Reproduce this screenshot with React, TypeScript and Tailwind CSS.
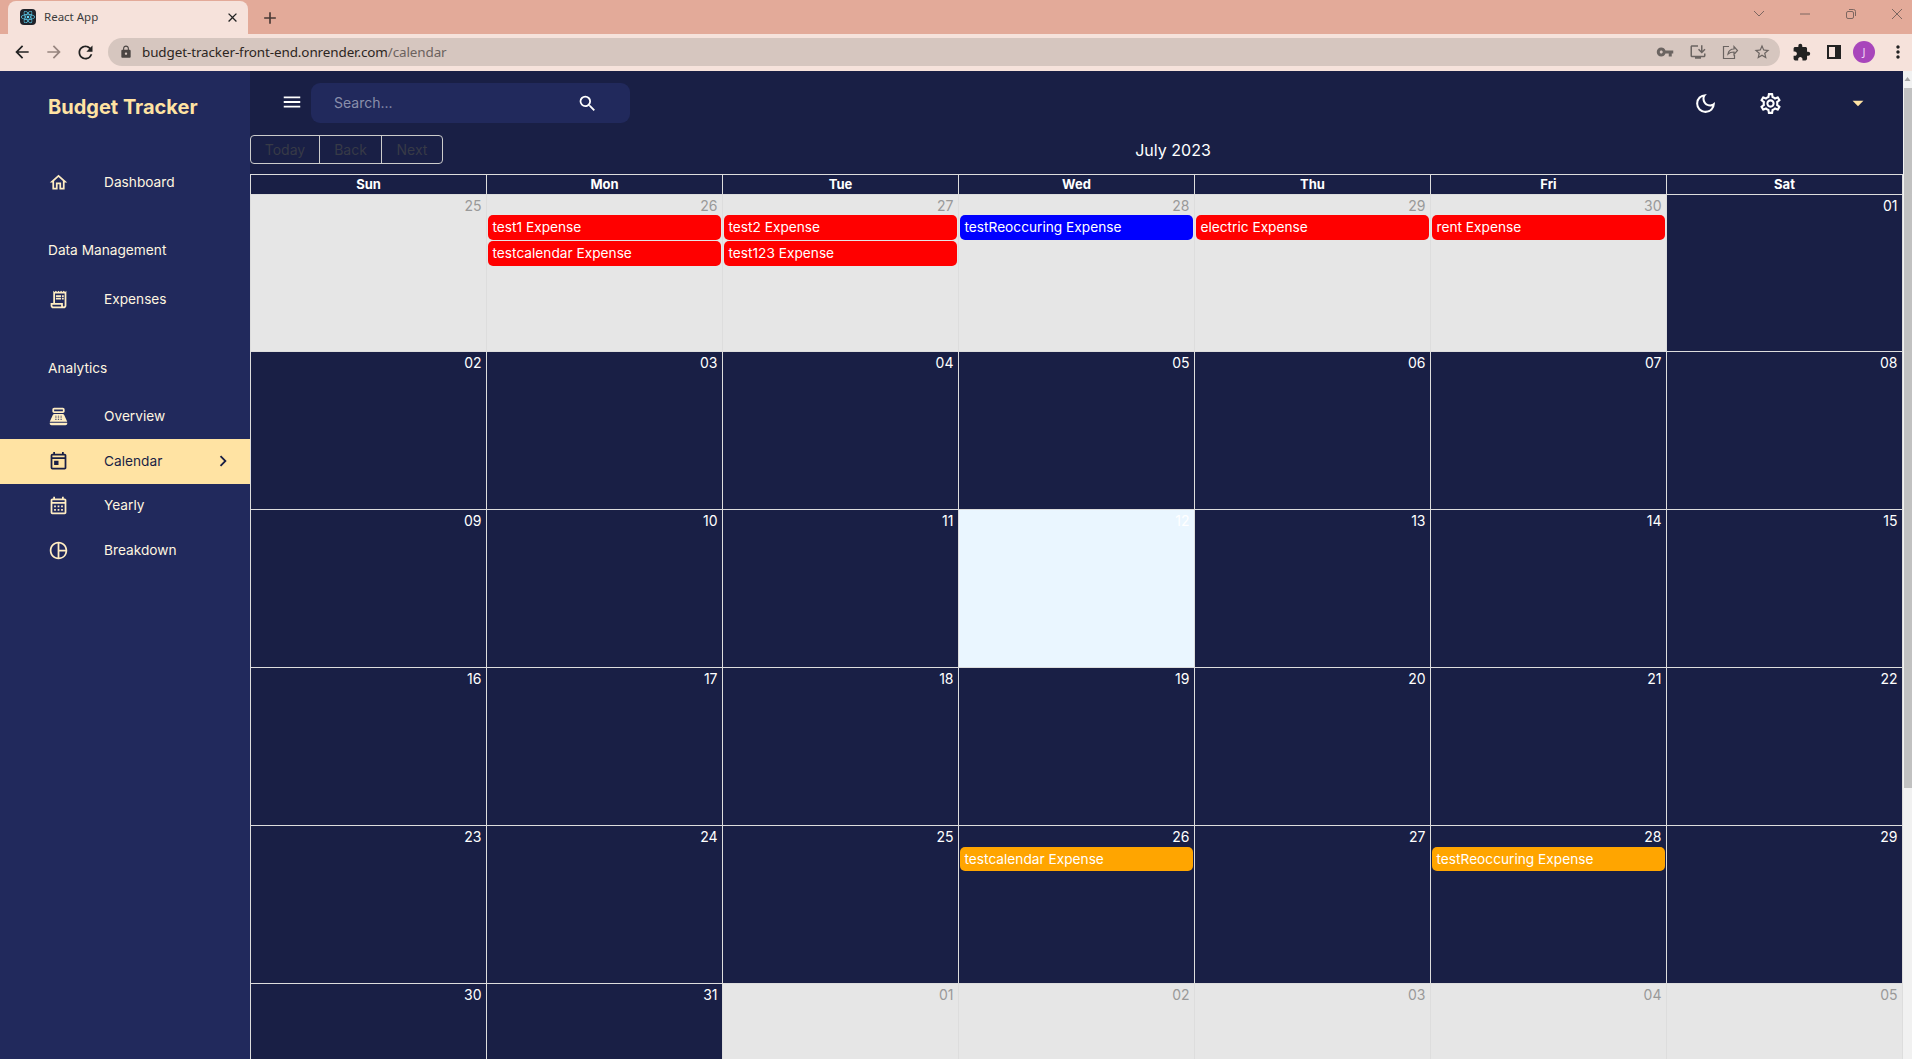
import { FaReact } from "react-icons/fa";
import {
  MdAdd,
  MdArrowBack,
  MdArrowDropDown,
  MdArrowForward,
  MdChevronRight,
  MdClose,
  MdExtension,
  MdInstallDesktop,
  MdLock,
  MdMenu,
  MdMoreVert,
  MdOutlineCalendarMonth,
  MdOutlineDarkMode,
  MdOutlineHome,
  MdOutlinePieChart,
  MdOutlinePointOfSale,
  MdOutlineReceiptLong,
  MdOutlineSettings,
  MdOutlineToday,
  MdRefresh,
  MdSearch,
  MdStarBorder,
  MdVpnKey,
} from "react-icons/md";
import type { IconType } from "react-icons";

type Ev = { label: string; color: string };
type Day = { n: string; off?: boolean; today?: boolean; events?: Ev[] };

const RED = "bg-[#ff0000]";
const BLUE = "bg-[#0000ff]";
const ORANGE = "bg-[#ffa500]";

const days: Day[] = [
  { n: "25", off: true },
  { n: "26", off: true, events: [{ label: "test1 Expense", color: RED }, { label: "testcalendar Expense", color: RED }] },
  { n: "27", off: true, events: [{ label: "test2 Expense", color: RED }, { label: "test123 Expense", color: RED }] },
  { n: "28", off: true, events: [{ label: "testReoccuring Expense", color: BLUE }] },
  { n: "29", off: true, events: [{ label: "electric Expense", color: RED }] },
  { n: "30", off: true, events: [{ label: "rent Expense", color: RED }] },
  { n: "01" },
  { n: "02" }, { n: "03" }, { n: "04" }, { n: "05" }, { n: "06" }, { n: "07" }, { n: "08" },
  { n: "09" }, { n: "10" }, { n: "11" }, { n: "12", today: true }, { n: "13" }, { n: "14" }, { n: "15" },
  { n: "16" }, { n: "17" }, { n: "18" }, { n: "19" }, { n: "20" }, { n: "21" }, { n: "22" },
  { n: "23" }, { n: "24" }, { n: "25" },
  { n: "26", events: [{ label: "testcalendar Expense", color: ORANGE }] },
  { n: "27" },
  { n: "28", events: [{ label: "testReoccuring Expense", color: ORANGE }] },
  { n: "29" },
  { n: "30" }, { n: "31" },
  { n: "01", off: true }, { n: "02", off: true }, { n: "03", off: true }, { n: "04", off: true }, { n: "05", off: true },
];

function BrowserChrome() {
  return (
    <div className="shrink-0 font-['Noto_Sans',sans-serif]">
      <div className="flex h-[34px] items-end bg-[#e3aa99] pl-2">
        <div className="flex h-[33px] w-[240px] items-center rounded-t-lg bg-[#f6e2db] pb-px pl-3 pr-2">
          <div className="flex h-4 w-4 items-center justify-center rounded-sm bg-[#20232a]">
            <FaReact size={14} className="text-[#61dafb]" />
          </div>
          <span className="ml-2 flex-1 text-[11.5px] text-[#3c3c3c]">React App</span>
          <MdClose size={15} className="text-[#222]" />
        </div>
        <MdAdd size={20} className="mb-[6px] ml-3 text-[#4a3a36]" />
        <div className="mb-[10px] ml-auto flex items-center gap-[26px] pr-[5px] text-[#7d6660]">
          <svg width="20" height="20" viewBox="0 0 20 20" fill="none" stroke="currentColor"><path d="M5 7l5 5 5-5" /></svg>
          <svg width="20" height="20" viewBox="0 0 20 20" fill="none" stroke="currentColor"><path d="M5 10h10" /></svg>
          <svg width="20" height="20" viewBox="0 0 20 20" fill="none" stroke="currentColor"><rect x="5.500" y="7.500" width="7" height="7" rx="1.500" /><path d="M8 5.500h4.500a2 2 0 0 1 2 2V12" /></svg>
          <svg width="20" height="20" viewBox="0 0 20 20" fill="none" stroke="currentColor"><path d="M5 5l10 10M15 5L5 15" /></svg>
        </div>
      </div>
      <div className="flex h-[37px] items-center bg-[#f6e2db] pb-[1px]">
        <MdArrowBack size={20} className="ml-[12px] text-[#222]" />
        <MdArrowForward size={20} className="ml-3 text-[#97857f]" />
        <MdRefresh size={21} className="ml-[11px] text-[#222]" />
        <div className="ml-3 flex h-7 w-[1672px] items-center rounded-full bg-[#d6c6bf] pl-[11px] pr-[9px]">
          <MdLock size={14} className="text-[#4b4543]" />
          <span className="ml-[9px] text-[13.45px] tracking-[-0.1px] text-[#2c2522]">
            budget-tracker-front-end.onrender.com<span className="text-[#6c625e]">/calendar</span>
          </span>
          <div className="ml-auto flex items-center gap-[14px] text-[#6b6461]">
            <MdVpnKey size={18} className="mr-[1px]" />
            <MdInstallDesktop size={18} />
            <svg width="18" height="18" viewBox="0 0 18 18" fill="none" stroke="currentColor" strokeWidth="1.2">
              <path d="M8 3.500H2.500v12h11V12M7 11c.5-3 3-5 6-5V3.500l3.500 4-3.500 4V9c-2.500 0-4.500.5-6 2z" />
            </svg>
            <MdStarBorder size={18} />
          </div>
        </div>
        <MdExtension size={19} className="ml-[12px] text-[#222]" />
        <div className="ml-[16px] flex h-[14px] w-[14px] justify-end border-2 border-[#222] bg-[#f6e2db]">
          <div className="h-full w-[4px] bg-[#222]" />
        </div>
        <div className="ml-[12px] flex h-[22px] w-[22px] items-center justify-center rounded-full bg-[#a846bb] text-[11px] text-[#f3d9f5]">J</div>
        <MdMoreVert size={20} className="ml-[13px] text-[#222]" />
      </div>
    </div>
  );
}

function NavItem({ icon: Icon, label, active }: { icon: IconType; label: string; active?: boolean }) {
  return (
    <div className={`flex h-[44.5px] items-center pl-[46px] ${active ? "bg-[#ffe3a3] text-[#191f45]" : "text-[#fff6e0]"}`}>
      <div className="flex w-6 justify-center">
        <Icon size={21} className={active ? "text-[#191f45]" : "text-[#ffedc2]"} />
      </div>
      <span className="ml-[34px] flex-1 text-[13.7px]">{label}</span>
      {active && <MdChevronRight size={22} className="mr-[16px]" />}
    </div>
  );
}

function Section({ title, first }: { title: string; first?: boolean }) {
  return (
    <div className={`mb-4 pl-12 text-[13.7px] leading-[21px] text-[#fff6e0] ${first ? "mt-[35.5px]" : "mt-9"}`}>{title}</div>
  );
}

function Sidebar() {
  return (
    <aside className="w-[250px] shrink-0 bg-[#21295c]">
      <div className="mb-[39px] pl-12 pt-[22px] text-xl font-bold text-[#ffe3a3]">Budget Tracker</div>
      <NavItem icon={MdOutlineHome} label="Dashboard" />
      <Section title="Data Management" first />
      <NavItem icon={MdOutlineReceiptLong} label="Expenses" />
      <Section title="Analytics" />
      <NavItem icon={MdOutlinePointOfSale} label="Overview" />
      <NavItem icon={MdOutlineToday} label="Calendar" active />
      <NavItem icon={MdOutlineCalendarMonth} label="Yearly" />
      <NavItem icon={MdOutlinePieChart} label="Breakdown" />
    </aside>
  );
}

function TopBar() {
  return (
    <div className="flex h-16 items-start pt-3 text-white">
      <div className="ml-[30px] mr-[7px] mt-2 flex w-6 justify-center">
        <MdMenu size={22} />
      </div>
      <div className="flex h-10 w-[319px] items-center justify-between rounded-[9px] bg-[#21295c] pl-[23px] pr-[32px]">
        <span className="text-sm text-[#8a8fab]">Search...</span>
        <MdSearch size={21} />
      </div>
      <div className="ml-auto mt-[7px] flex items-center pr-[32px]">
        <MdOutlineDarkMode size={25} />
        <MdOutlineSettings size={25} className="ml-10" />
        <MdArrowDropDown size={26} className="ml-[62px] text-[#ffe3a3]" />
      </div>
    </div>
  );
}

function Toolbar() {
  return (
    <div className="mb-[10px] flex h-[29px] items-center">
      <div className="flex h-[29px] items-stretch rounded border border-[#ccc] text-sm text-[#373a47]">
        <div className="flex w-[68px] items-center justify-center">Today</div>
        <div className="flex w-[62px] items-center justify-center border-l border-[#ccc]">Back</div>
        <div className="flex w-[61px] items-center justify-center border-l border-[#ccc]">Next</div>
      </div>
      <div className="flex-1 text-center text-base text-white">July 2023</div>
    </div>
  );
}

function Calendar() {
  return (
    <div className="border-r border-[#ddd]">
      <div className="grid grid-cols-7 border-t border-[#ddd]">
        {["Sun", "Mon", "Tue", "Wed", "Thu", "Fri", "Sat"].map((d) => (
          <div key={d} className="h-[18.5px] border-l border-[#ddd] text-center text-[13px] font-bold leading-[18.5px] text-white">
            {d}
          </div>
        ))}
      </div>
      <div className="grid auto-rows-[157.9px] grid-cols-7">
        {days.map((d, i) => (
          <div
            key={i}
            className={`min-w-0 border-l border-t border-[#ddd] ${d.off ? "bg-[#e6e6e6]" : d.today ? "bg-[#eaf6ff]" : ""}`}
          >
            <div className={`h-[20.5px] pr-[4.5px] text-right text-sm leading-[21px] ${d.off ? "text-[#999]" : "text-white"}`}>{d.n}</div>
            <div className="flex flex-col gap-[1.5px] pl-[0.5px] pr-[1.5px]">
              {d.events?.map((e) => (
                <div key={e.label} className={`h-[24.5px] rounded-[5px] px-[5px] py-[2px] text-[13.7px] leading-[20px] text-white ${e.color}`}>
                  {e.label}
                </div>
              ))}
            </div>
          </div>
        ))}
      </div>
    </div>
  );
}

function Scrollbar() {
  return (
    <div className="flex w-[9px] shrink-0 flex-col bg-[#f1f1f1]">
      <svg width="9" height="17" viewBox="0 0 9 17" className="shrink-0 text-[#a3a3a3]">
        <path d="M4.500 6L7.500 10H1.500Z" fill="currentColor" />
      </svg>
      <div className="ml-px h-[700px] bg-[#c1c1c1]" />
    </div>
  );
}

export default function App() {
  return (
    <div className="flex h-screen flex-col overflow-hidden bg-[#191f45] font-['Inter',sans-serif]">
      <BrowserChrome />
      <div className="flex min-h-0 flex-1">
        <Sidebar />
        <main className="min-w-0 flex-1">
          <TopBar />
          <Toolbar />
          <Calendar />
        </main>
        <Scrollbar />
      </div>
    </div>
  );
}
